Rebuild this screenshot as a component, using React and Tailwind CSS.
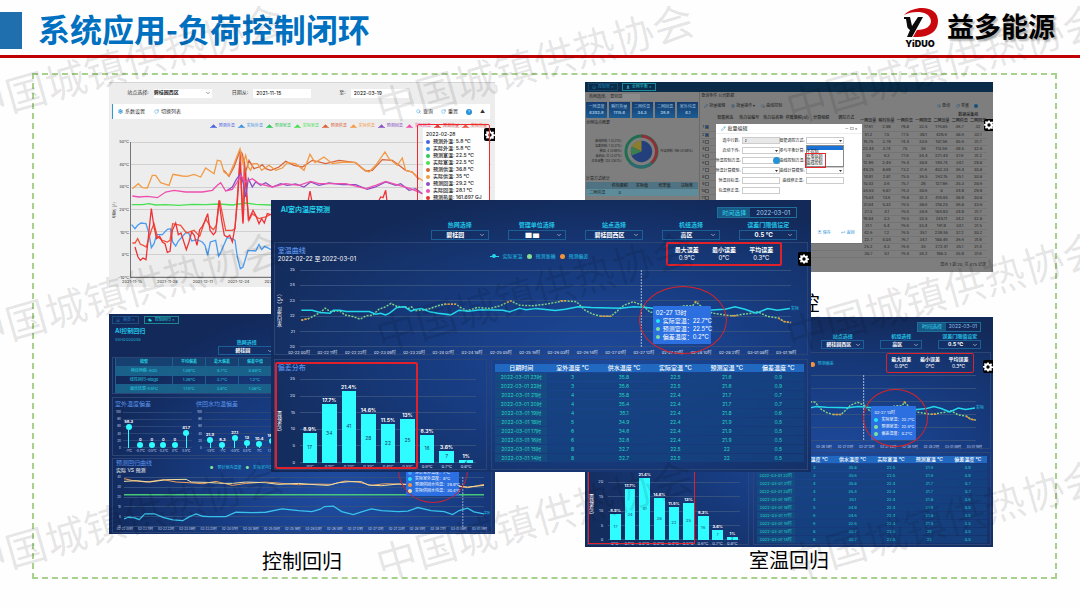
import React from "react";
import {
  ChevronDown,
  Cloud,
  Home,
  Pencil,
  RotateCw,
  Search,
  Settings,
  User,
} from "lucide-react";

const hours = ["23", "22", "21", "20", "19", "18", "17", "16", "15", "14"];
const outdoor = [3, 3, 4, 4, 4, 5, 6, 6, 8, 8];
const supply = [35.8, 35.6, 35.8, 35.4, 35.1, 34.9, 34.6, 32.6, 32.7, 32.7];
const actual = [22.5, 22.5, 22.4, 22.4, 22.4, 22.4, 22.4, 22.4, 22.5, 22.5];
const predicted = [21.6, 21.6, 21.7, 21.7, 21.8, 21.9, 21.9, 21.9, 22, 22];
const deviation = [0.9, 0.9, 0.7, 0.7, 0.6, 0.5, 0.5, 0.5, 0.5, 0.5];

const histogram = [
  { label: "0℃", count: 17, percent: 8.9 },
  { label: "0.1℃", count: 34, percent: 17.7 },
  { label: "0.2℃", count: 41, percent: 21.4 },
  { label: "0.3℃", count: 28, percent: 14.6 },
  { label: "0.4℃", count: 22, percent: 11.5 },
  { label: "0.5℃", count: 25, percent: 13 },
  { label: "0.6℃", count: 16, percent: 8.3 },
  { label: "0.7℃", count: 7, percent: 3.6 },
  { label: "0.8℃", count: 2, percent: 1 },
];

const timeTicks = [
  "02-22 00时", "02-22 11时", "02-22 22时", "02-23 09时", "02-23 20时", "02-24 07时",
  "02-24 18时", "02-25 05时", "02-25 16时", "02-26 03时", "02-26 14时", "02-27 01时",
  "02-27 12时", "02-27 23时", "02-28 10时", "02-28 21时", "03-01 08时", "03-01 19时",
];

// Small parts shared by the dark dashboards

const DarkSelect = ({ label, value, small }) => (
  <label className="flex min-w-0 flex-1 flex-col">
    <span
      className={
        small
          ? "text-center text-[5px] leading-[8px] font-bold text-[#22c3e6]"
          : "text-center text-[6px] leading-[9px] font-bold text-[#22c3e6]"
      }
    >
      {label}
    </span>
    <span
      className={
        small
          ? "flex h-[9px] items-center border border-[#1c5f96] pr-[2px]"
          : "mt-px flex h-[10px] items-center border border-[#1c5f96] pr-[3px]"
      }
    >
      <select
        className={
          small
            ? "min-w-0 flex-1 appearance-none bg-transparent text-[5px] leading-[7px] font-bold text-white [text-align-last:center]"
            : "min-w-0 flex-1 appearance-none bg-transparent text-[6px] leading-[8px] font-bold text-white [text-align-last:center]"
        }
      >
        <option>{value}</option>
      </select>
      <ChevronDown className="size-[6px] text-white" />
    </span>
  </label>
);

const GearButton = ({ className }) => (
  <button
    aria-label="设置"
    className={`absolute flex items-center justify-center rounded-l-[2px] bg-black text-white ${className}`}
  >
    <svg viewBox="0 0 24 24" className="size-[10px] shrink-0" fill="currentColor">
      <path
        fillRule="evenodd"
        d="M10 1h4l.7 3 2 .9L19.400 3.200l2.300 2.500-1.500 2.500.8 2 3 .7v3.200l-3 .8-.8 2 1.500 2.500-2.400 2.400-2.500-1.600-2 .9L14 23h-4l-.8-2.900-2-.9-2.500 1.600-2.400-2.400 1.600-2.500-.9-2-3-.8v-3.200l3-.7.9-2-1.600-2.500 2.400-2.500 2.500 1.700 2-.9zM12 8a4 4 0 1 0 0 8 4 4 0 0 0 0-8z"
      />
    </svg>
  </button>
);

const GridLines = ({ rows, className }) => (
  <div className={`absolute inset-0 flex flex-col justify-between ${className}`}>
    {Array.from({ length: rows }, (_, i) => (
      <div key={i} className="h-px bg-current" />
    ))}
  </div>
);

const YAxis = ({ ticks, className }) => (
  <div className={`-my-[3px] flex flex-col justify-between text-right ${className}`}>
    {ticks.map((t) => (
      <span key={t} className="leading-[6px]">
        {t}
      </span>
    ))}
  </div>
);

const TooltipRow = ({ color, children }) => (
  <div className="flex items-center gap-[3px] whitespace-nowrap">
    <span className="size-[4px] shrink-0 rounded-full" style={{ background: color }} />
    {children}
  </div>
);

const RoomCurve = () => (
  <svg
    viewBox="88 223 1504 230"
    preserveAspectRatio="none"
    className="absolute inset-0 h-full w-full overflow-visible [&_*]:[vector-effect:non-scaling-stroke]"
    fill="none"
  >
    <path d="M1133 223V453" stroke="#a9b8d6" strokeWidth="1" strokeDasharray="2 1" />
    <polyline
      stroke="#7fd08a"
      strokeWidth="1.500"
      strokeDasharray="2 1.300"
      points="92,373 115,368 150,350 165,337 180,347 210,345 225,357 250,362 272,370 290,360 310,358 330,340 350,333 367,323 385,332 410,333 420,338 430,333 440,345 480,340 510,330 530,325 565,325 580,335 600,345 630,335 670,338 700,330 733,315 760,328 800,330 840,325 870,320 895,315 935,318 960,343 985,355 1010,361 1040,361 1060,345 1080,328 1108,318 1140,330 1160,350 1240,335 1265,330 1290,330 1300,318 1320,335 1350,352 1410,360 1470,352 1490,348 1520,362 1555,367 1570,377 1590,380"
    />
    <path
      stroke="#f0913a"
      strokeWidth="1.500"
      strokeDasharray="2 1.300"
      d="M92 373L115 368M530 325H565M722 320L736 315M885 315H905M1008 361H1042M1296 318H1308M1408 360H1430M1552 367L1570 377L1592 380"
    />
    <polyline
      stroke="#22d8ea"
      strokeWidth="1.500"
      points="92,343 125,343 150,350 180,352 190,343 210,343 230,347 300,347 320,355 335,352 350,357 362,352 385,335 408,333 428,346 440,341 460,338 485,348 510,352 550,357 575,343 605,346 640,342 710,343 730,348 760,337 780,342 810,338 870,344 900,340 940,333 980,335 1070,337 1110,333 1150,335 1190,340 1250,345 1320,345 1360,342 1390,340 1420,333 1450,340 1485,352 1520,338 1550,343 1588,338"
    />
  </svg>
);

// Room temperature dashboard, also shown in a compact size
const RoomDashboard = ({ small }) => {
  const title = small
    ? "text-[5px] leading-[8px] text-[#5b93ea]"
    : "text-[7px] leading-[9px] font-medium text-[#5b93ea]";
  const tick = small ? "text-[4px] text-[#d5deef]" : "text-[4px] text-[#e4eaf5]";
  const panel = "border border-[#2c4575] bg-[#173a78]/20";

  return (
    <div
      className={
        small
          ? "relative bg-[radial-gradient(ellipse_at_62%_58%,#1f4da3_0%,#183d85_35%,#132a59_75%)] px-[2px] pb-[2px]"
          : "relative bg-[radial-gradient(ellipse_at_62%_58%,#1f4da3_0%,#183d85_35%,#132a59_75%)] px-[3px] pb-[2px]"
      }
    >
      <header className={small ? "h-[35px] px-[2.500%] pt-[5px]" : "h-[42px] pr-[2%] pl-[1.300%] pt-[5px]"}>
        <div className={small ? "flex h-[10px] justify-between" : "flex h-[13px] items-start justify-between"}>
          <h2
            className={
              small
                ? "text-[6px] leading-[9px] font-bold text-[#22d3ee]"
                : "text-[7px] leading-[10px] font-bold text-[#22d3ee]"
            }
          >
            AI室内温度预测
          </h2>
          <label
            className={
              small
                ? "flex h-[10px] items-center border border-[#1f6f9c] text-[5px]"
                : "mt-[2px] flex h-[11px] items-center border border-[#1f6f9c] text-[6px]"
            }
          >
            <span className="flex h-full items-center bg-[#175a86] px-[4px] text-[#2fd6ee]">
              时间选择
            </span>
            <input
              className={small ? "w-[34px] text-center text-[#8fc3ea]" : "w-[46px] text-center text-[#9fd0f2]"}
              defaultValue="2022-03-01"
            />
          </label>
        </div>
        <div className={small ? "flex gap-[16px] pl-[28%]" : "flex gap-[19px] pt-[2px] pl-[29%]"}>
          <DarkSelect small={small} label="热网选择" value="碧桂园" />
          <DarkSelect small={small} label="管理单位选择" value="▇ ▆" />
          <DarkSelect small={small} label="站点选择" value="碧桂园西区" />
          <DarkSelect small={small} label="机组选择" value="高区" />
          <DarkSelect small={small} label="误差门限值设定" value="0.5 ℃" />
        </div>
      </header>

      <section className={`relative ${panel} ${small ? "h-[97px]" : "h-[113px]"}`}>
        <div className={small ? "flex h-[22px] justify-between pl-[3px] pr-[4%]" : "flex h-[27px] justify-between pl-[3px] pr-[4.700%]"}>
          <div className="w-[42%]">
            <h3 className={`${title} pt-[3px]`}>室温曲线</h3>
            <p className={small ? "text-[5px] leading-[7px] text-white" : "text-[6px] leading-[8px] text-white"}>
              2022-02-22 至 2022-03-01
            </p>
          </div>
          <div
            className={
              small
                ? "flex flex-1 items-center gap-[3px] text-[4px] text-[#22c3e6]"
                : "flex flex-1 items-center gap-[4px] text-[5px] text-[#22c3e6]"
            }
          >
            <span className="h-px w-[9px] bg-[#22d8ea] text-center">
              <i className="mx-auto -mt-[2px] block size-[4px] rounded-full bg-[#22d8ea]" />
            </span>
            实际室温
            <i className="size-[5px] rounded-full bg-[#86e08e]" />
            预测准确
            <i className="size-[5px] rounded-full bg-[#f7933a]" />
            预测偏差
          </div>
          <div
            className={
              small
                ? "flex h-[20px] w-[23%] items-center rounded-[2px] border border-[#e0202a] text-center text-[5px] leading-[7px] text-white"
                : "-mt-px flex h-[24px] w-[23%] items-center rounded-[2px] border-2 border-[#e0202a] text-center text-[6px] leading-[8px] text-white"
            }
          >
            {[["最大误差", "0.9℃"], ["最小误差", "0℃"], ["平均误差", "0.3℃"]].map(([k, v]) => (
              <p key={k} className="flex-1">
                <b>{k}</b>
                <br />
                {v}
              </p>
            ))}
          </div>
        </div>
        <div className={`flex pr-[1.500%] ${tick} ${small ? "h-[66px]" : "h-[77px]"}`}>
          <div className="flex w-[2.400%] items-center justify-center text-[5px] text-white">
            <span className="rotate-180 whitespace-nowrap [writing-mode:vertical-rl]">
              室内温度（℃）
            </span>
          </div>
          <YAxis ticks={[25, 24, 23, 22, 21, 20]} className="w-[1.400%]" />
          <div className="relative ml-[5px] flex-1">
            <GridLines rows={6} className="text-[#33507f]" />
            <RoomCurve />
          </div>
          <span className="self-center text-[#22c3e6]">实际</span>
        </div>
        <div
          className={
            small
              ? "mt-[3px] flex justify-between pr-[2%] pl-[2.500%] text-[3px] leading-[6px] whitespace-nowrap text-[#d5deef]"
              : "mt-[3px] flex justify-between pr-[2%] pl-[2.500%] text-[4px] leading-[6px] whitespace-nowrap text-[#e4eaf5]"
          }
        >
          {timeTicks.map((t) => (
            <span key={t}>{t}</span>
          ))}
        </div>
        {/* highlighted reading */}
        <div
          className={
            small
              ? "absolute top-[53px] left-[70.500%] w-[11%] rounded-[1px] bg-[#2b6fe0] px-[3px] py-[3px] text-[4px] leading-[7px] text-white"
              : "absolute top-[63px] left-[71%] w-[11%] rounded-[1px] bg-[#2b6fe0] px-[3px] py-[3px] text-[6px] leading-[8px] text-white"
          }
        >
          <div>02-27 13时</div>
          <TooltipRow color="#22e5f5">实际室温：22.7℃</TooltipRow>
          <TooltipRow color="#7fe39a">预测室温：22.5℃</TooltipRow>
          <TooltipRow color="#7fe39a">偏差温度：0.2℃</TooltipRow>
        </div>
        <div
          className={
            small
              ? "absolute top-[36px] left-[68.500%] h-[58px] w-[16%] rounded-[50%] border border-[#d9232b]"
              : "absolute top-[43px] left-[68.500%] h-[68px] w-[16.500%] rounded-[50%] border border-[#d9232b]"
          }
        />
      </section>

      <div className={small ? "mt-[3px] flex h-[93px] gap-[4px]" : "mt-[4px] flex h-[111px] gap-[4px]"}>
        <section className={`relative w-[40%] ${panel}`}>
          <h3 className={`pl-[3px] ${title} ${small ? "h-[15px]" : "h-[19px] pt-[3px]"}`}>偏差分布</h3>
          <div className={`flex pr-[5%] ${tick} ${small ? "h-[72px]" : "h-[84px]"}`}>
            <div className="flex w-[6%] items-center justify-center text-[5px] text-white">
              <span className="rotate-180 whitespace-nowrap [writing-mode:vertical-rl]">记录数量</span>
            </div>
            <YAxis ticks={[25, 20, 15, 10, 5, 0]} className="w-[4%]" />
            <div className="relative ml-[5px] flex-1">
              <GridLines rows={6} className="text-[#33507f]" />
              <div className="absolute inset-0 flex items-end">
                {histogram.map((b) => (
                  <div key={b.label} className="flex h-full flex-1 flex-col items-center justify-end">
                    <span className={small ? "text-[4px] leading-[6px] font-bold text-white" : "text-[5px] leading-[7px] font-bold text-white"}>
                      {b.percent}%
                    </span>
                    <div
                      className={
                        small
                          ? "flex w-[74%] items-center justify-center bg-[#2ffcff] text-[4px] text-[#17406b]"
                          : "flex w-[74%] items-center justify-center bg-[#2ffcff] text-[5px] text-[#17406b]"
                      }
                      style={{ height: `${b.percent * 4}%` }}
                    >
                      {b.count}
                    </div>
                  </div>
                ))}
              </div>
            </div>
          </div>
          <div className={`flex pl-[12%] pr-[5%] pt-px text-center leading-[6px] ${tick}`}>
            {histogram.map((b) => (
              <span key={b.label} className="flex-1">
                {b.label}
              </span>
            ))}
          </div>
          <div
            className={
              small
                ? "absolute inset-y-0 left-0 w-[67%] border border-[#e0202a]"
                : "absolute top-[2px] bottom-0 left-0 w-[67.500%] rounded-[2px] border-2 border-[#e0202a]"
            }
          />
        </section>
        <section className={`flex-1 ${panel} px-[3px] ${small ? "pt-[2px]" : "pt-[3px]"}`}>
          <table
            className={
              small
                ? "w-full table-fixed border-separate border-spacing-x-0 border-spacing-y-px text-center text-[4px] leading-[7px] text-[#25d3d0]"
                : "w-full table-fixed border-separate border-spacing-x-0 border-spacing-y-px text-center text-[5px] leading-[8px] text-[#25d3c4]"
            }
          >
            <thead className={small ? "bg-[#2068c0] text-[5px] text-white" : "bg-[#2068c0] text-[6px] leading-[8px] text-white"}>
              <tr>
                {["日期时间", "室外温度 ℃", "供水温度 ℃", "实际室温 ℃", "预测室温 ℃", "偏差温度 ℃"].map((h) => (
                  <th key={h} className="p-0 font-medium whitespace-nowrap">
                    {h}
                  </th>
                ))}
              </tr>
            </thead>
            <tbody>
              {hours.map((h, i) => (
                <tr key={h} className="bg-[#154280]/80">
                  <td className="bg-[#17507f]/60 p-0 whitespace-nowrap">2022-03-01 {h}时</td>
                  <td className="p-0">{outdoor[i]}</td>
                  <td className="p-0">{supply[i]}</td>
                  <td className="p-0">{actual[i]}</td>
                  <td className="p-0">{predicted[i]}</td>
                  <td className="p-0">{deviation[i]}</td>
                </tr>
              ))}
            </tbody>
          </table>
        </section>
      </div>
      <GearButton className={small ? "top-[43px] right-0 h-[13px] w-[10px]" : "top-[52px] right-0 h-[14px] w-[13px]"} />
    </div>
  );
};

// Load forecast window

const forecastLegend = [
  ["预测外温", "#4a62e0"],
  ["实际外温", "#3f93dd"],
  ["预测室温", "#2ec95c"],
  ["实际室温", "#48e052"],
  ["预测供温", "#d9643a"],
  ["实际供温", "#f39a45"],
  ["预测回温", "#8a4fc4"],
  ["实际回温", "#ee4fae"],
  ["预测热量", "#e3342f"],
  ["实际热量", "#f0523c"],
];

const forecastValues = [
  "预测外温: 5.8 ℃",
  "实际外温: 5.8 ℃",
  "预测室温: 22.5 ℃",
  "实际室温: 22.5 ℃",
  "预测供温: 36.8 ℃",
  "实际供温: 35 ℃",
  "预测回温: 29.2 ℃",
  "实际回温: 28.1 ℃",
  "预测热量: 161.697 GJ",
];

const ForecastWindow = () => (
  <div className="relative h-[205px] border-t border-[#d5d5d5] bg-[#ededed] pl-[3px] text-[5px] text-[#333]">
    <div className="flex h-[20px] items-center pl-[4%]">
      <label className="flex items-center gap-[5px]">
        站点选择:
        <span className="flex w-[58px] items-center bg-white pr-px">
          <select className="h-[9px] min-w-0 flex-1 appearance-none font-medium text-black">
            <option>碧桂园西区</option>
          </select>
          <ChevronDown className="size-[6px]" />
        </span>
      </label>
      <label className="ml-[20px] flex items-center gap-[5px]">
        日期从:
        <input className="h-[9px] w-[58px] bg-white pl-[3px] text-black" defaultValue="2021-11-15" />
      </label>
      <label className="ml-[28px] flex items-center gap-[5px]">
        至:
        <input className="h-[9px] w-[58px] bg-white pl-[3px] text-black" defaultValue="2022-03-19" />
      </label>
    </div>
    <div className="mt-[1px] mr-[5px] flex h-[15px] items-center border-l border-[#2d9bd8] bg-white px-[5px]">
      <button className="flex items-center gap-[2px]">
        <Settings className="size-[5px] text-[#2591d6]" strokeWidth={4} />
        系数设置
      </button>
      <button className="ml-[9px] flex items-center gap-[2px]">
        <RotateCw className="size-[5px] text-[#2591d6]" />
        切换列表
      </button>
      <button className="ml-auto flex items-center gap-[2px]">
        <Search className="size-[5px] text-[#2591d6]" />
        查询
      </button>
      <button className="ml-[8px] flex items-center gap-[2px]">
        <RotateCw className="size-[5px] text-[#2591d6]" />
        重置
      </button>
      <button className="mx-[8px] size-[6px] rounded-full bg-[#2591d6] text-[4px] leading-[6px] text-white">?</button>
      <span>▲</span>
    </div>
    <div className="flex h-[14px] items-center justify-between pr-[8px] pl-[25.500%] text-[4px]">
      {forecastLegend.map(([name, color]) => (
        <span key={name} className="flex items-center gap-[2px] whitespace-nowrap" style={{ color }}>
          <svg viewBox="0 0 8 4" className="h-[4px] w-[7px]" fill="currentColor">
            <path d="M4 0L7 3H8V4H0V3H1z" />
          </svg>
          {name}
        </span>
      ))}
    </div>
    <div className="mt-[9px] flex h-[136px] pr-[4px]">
      <div className="flex w-[6px] items-center">
        <span className="rotate-180 text-[4px] whitespace-nowrap [writing-mode:vertical-rl]">温度(℃)</span>
      </div>
      <YAxis
        ticks={["50℃", "40℃", "30℃", "20℃", "10℃", "0℃", "-10℃"]}
        className="w-[11px] text-[4px]"
      />
      <div className="relative ml-px flex-1 border-b border-l border-[#777]">
        <GridLines rows={7} className="text-[#d0d0d0]" />
        <svg
          viewBox="96 200 1080 405"
          preserveAspectRatio="none"
          className="absolute inset-0 h-full w-full [&_*]:[vector-effect:non-scaling-stroke]"
          fill="none"
          strokeWidth="1.300"
        >
          <g transform="translate(0 375)">
            <polyline stroke="#48e052" points="98,13 130,13 150,10 170,14 200,13 240,15 280,12 320,13 360,11 400,14 440,8 470,12 515,14 900,12 1050,13" />
            <polyline stroke="#4a9cf0" points="98,73 108,85 116,75 126,68 141,70 150,100 157,142 165,130 173,103 190,103 205,87 214,85 221,125 230,137 238,122 262,95 270,100 278,122 294,118 310,125 318,135 326,165 334,125 350,120 359,168 368,150 384,112 400,115 408,120 415,170 424,205 432,200 447,150 470,152 480,132 488,148 497,138 515,147 700,120 900,100 970,90" />
            <polyline stroke="#f0523c" points="100,128 108,128 116,115 124,132 133,135 142,140 157,90 165,70 175,108 190,120 205,125 213,120 221,70 245,75 262,98 285,90 302,108 320,55 335,80 343,88 352,75 362,0 380,90 400,90 408,85 415,-10 424,-145 431,65 436,-120 442,-20 450,60 460,40 480,55 500,50 515,42" />
            <polyline stroke="#ee3338" points="108,140 117,170 124,180 132,173 141,178 157,25 165,80 173,115 182,108 190,125 198,130 205,156 213,153 220,90 230,68 238,103 246,98 262,148 270,125 278,95 286,105 294,135 302,88 310,78 318,62 326,40 333,90 343,103 350,95 360,0 368,60 376,105 385,110 392,105 400,125 408,80 415,5 423,-113 432,70 440,-85 448,60 462,30 470,45 480,70 488,55 496,68 505,40 515,43 600,20 626,10 633,-28 640,10 760,30 835,10 845,-10 852,-8 860,-30 866,20" />
          </g>
          <polyline stroke="#8a4fc4" points="385,345 400,335 412,312 425,295 433,325 440,365 448,310 460,335 470,320 485,330 500,322 520,335 545,325 565,330 590,326 615,335 635,320 660,330 690,323 730,328 770,328 805,342 830,335 860,320 890,330 905,325 930,345 950,340 970,355" />
          <polyline stroke="#ee4fae" points="100,362 120,365 145,363 175,367 200,350 225,345 260,350 310,350 340,345 355,330 365,322 380,347 400,342 415,320 425,300 440,320 460,310 480,325 520,335 560,325 600,330 635,318 660,325 700,325 740,325 800,340 830,330 860,318 900,330 935,340 970,355" />
          <polyline stroke="#d9643a" points="375,285 390,303 405,275 423,226 430,235 440,290 450,255 465,280 480,275 490,268 500,280 515,285 540,275 560,258 585,270 610,275 640,255 680,265 720,255 770,262 800,287 820,285 850,253 880,255 900,270 920,285 940,290 960,312" />
          <polyline stroke="#f39a45" points="100,340 118,325 130,337 145,338 160,300 170,300 185,322 210,330 222,297 250,302 265,303 285,297 305,305 320,278 345,295 355,255 365,257 375,290 390,300 405,265 423,220 432,265 440,240 448,275 455,285 462,265 475,265 488,285 510,270 530,285 550,278 565,262 590,265 615,285 633,237 648,262 675,245 700,265 735,260 770,262 790,280 810,290 830,270 858,230 870,250 895,270 910,248 920,285 940,290 955,305 973,317" />
        </svg>
      </div>
    </div>
    <div className="flex gap-[15px] pl-[10px] text-[4px] leading-[8px] whitespace-nowrap">
      {["2021-11-15", "2021-11-28", "2021-12-11", "2021-12-24", "2022-01-06"].map((d) => (
        <span key={d}>{d}</span>
      ))}
    </div>
    <div className="absolute top-[45px] right-[6px] w-[66px] bg-white/95 pt-[3px] pl-[3px] text-[5px] leading-[7px] font-medium text-[#222]">
      <div>2022-02-28</div>
      {forecastValues.map((v, i) => (
        <TooltipRow key={v} color={forecastLegend[i][1]}>
          {v}
        </TooltipRow>
      ))}
    </div>
    <GearButton className="top-[45px] right-0 h-[13px] w-[11px]" />
    <div className="absolute top-[41px] right-[5px] h-[95px] w-[73px] rounded-[2px] border border-[#ee2a30]" />
  </div>
);

// Control regression window

const modelRows = [
  ["神经网络-SGD", "1.09℃", "4.7℃", "0.88℃"],
  ["线性回归-Ridge", "1.39℃", "3.7℃", "1.2℃"],
  ["最优结果-ESFC", "1.14℃", "3.8℃", "1.08℃"],
];

const Lollipops = ({ title, items, className }) => (
  <div className={className}>
    <h3 className="text-[6px] leading-[9px] text-[#5b93ea]">{title}</h3>
    <div className="mt-[4px] flex h-[36px] text-[3px] text-[#d5deef]">
      <YAxis ticks={[100, 80, 60, 40, 20, 0]} className="w-[6px]" />
      <div className="relative ml-[2px] flex-1">
        <GridLines rows={6} className="text-[#2b4576]" />
        <div className="absolute inset-0 flex">
          {items.map(([label, v]) => (
            <div key={label} className="flex flex-1 flex-col items-center justify-end">
              <span className="text-[4px] leading-[5px] font-bold text-white">{v}</span>
              <i className="size-[6px] shrink-0 rounded-full bg-[#2ffcff]" />
              <i className="w-px bg-[#2ffcff]" style={{ height: `${Math.max(v - 8, 0)}%` }} />
            </div>
          ))}
        </div>
      </div>
    </div>
    <div className="flex pl-[8px] pt-px text-center text-[3px] leading-[5px] text-[#d5deef]">
      {items.map(([label]) => (
        <span key={label} className="flex-1">
          {label}
        </span>
      ))}
    </div>
  </div>
);

const RegressionWindow = () => (
  <div className="relative overflow-hidden bg-[radial-gradient(ellipse_at_60%_80%,#1f4da3_0%,#183d85_35%,#12295a_75%)] px-[3px] pb-px">
    <div className="flex h-[11px] items-center gap-[5px] text-[4px] text-[#2a86d8]">
      <span className="flex h-[8px] items-center gap-[3px] border border-[#1c4f80] px-[3px]">
        <Home className="size-[4px]" /> 首页 ×
      </span>
      <span className="flex h-[8px] items-center gap-[3px] border border-[#1d8790] px-[3px] text-[#27d8dc]">
        <Cloud className="size-[4px]" fill="currentColor" /> 控制回归 ×
      </span>
    </div>
    <header className="flex h-[32px] gap-[14px] pl-[3px]">
      <div className="w-[23.500%]">
        <h2 className="pt-px text-[6px] leading-[10px] font-bold text-[#22c3e6]">AI控制回归</h2>
        <p className="text-[4px] leading-[7px] text-[#22a9cc]">SSH0000048</p>
      </div>
      <div className="flex flex-1 gap-[14px] pt-[13px]">
        <DarkSelect small label="热网选择" value="碧桂园" />
        <DarkSelect small label="管理单位选择" value="▇ ▆" />
        <DarkSelect small label="站点选择" value="碧桂园西区" />
        <DarkSelect small label="机组选择" value="高区" />
      </div>
    </header>
    <section className="border border-[#2c4575] px-[2px]">
      <table className="w-[190px] table-fixed border-collapse text-center text-[4px] leading-[8px] text-[#25cfe0]">
        <thead className="bg-[#15406f]">
          <tr>
            <th className="w-[57px] border-x border-[#1d5f8f] p-0">模型</th>
            {["平均偏差", "最大偏差", "偏差中值", "误差率"].map((h) => (
              <th key={h} className="border-x border-[#1d5f8f] p-0">
                {h}
              </th>
            ))}
          </tr>
        </thead>
        <tbody>
          {modelRows.map((row) => (
            <tr key={row[0]} className="border-t border-[#1d5f8f] odd:bg-[#1a6189]">
              {row.map((cell) => (
                <td key={cell} className="border-x border-[#1d5f8f] p-0">
                  {cell}
                </td>
              ))}
              <td className="border-x border-[#1d5f8f] p-0">4%</td>
            </tr>
          ))}
        </tbody>
      </table>
    </section>
    <section className="mt-[3px] flex h-[59px] gap-[4px] border border-[#2c4575] pt-px pl-[2px]">
      <Lollipops
        className="w-[77px]"
        title="室外温度偏差"
        items={[["-1℃", 58.3], ["-0.7℃", 0], ["-0.5℃", 0], ["-0.3℃", 0], ["0℃", 0], ["0.5℃", 41.7]]}
      />
      <Lollipops
        className="w-[94px]"
        title="供回水均温偏差"
        items={[["-1.5℃", 21.9], ["-1℃", 8.3], ["-0.5℃", 27.1], ["0.5℃", 13], ["1℃", 10.4], ["1.5℃", 18.8], ["2℃", 0.5]]}
      />
    </section>
    <section className="relative mt-[2px] border border-[#2c4575]">
      <div className="flex h-[18px] pl-[3px]">
        <div className="w-[25%]">
          <h3 className="text-[6px] leading-[8px] text-[#5b93ea]">预测回归曲线</h3>
          <p className="text-[5px] leading-[6px] text-white">实际 VS 预测</p>
        </div>
        <div className="flex items-center gap-[4px] text-[4px] text-[#22c3e6]">
          <span className="text-[#7fe39a]">●</span> 预计室内温度 <span className="text-[#7fe39a]">●</span>
          实际室内温度 <span>●</span> 预计室外温度
        </div>
      </div>
      <div className="flex h-[50px] pr-px text-[3px] text-[#d5deef]">
        <YAxis ticks={[40, 30, 20, 10, 0, -10]} className="w-[8px]" />
        <div className="relative ml-[3px] flex-1">
          <GridLines rows={6} className="text-[#33507f]" />
          <svg
            viewBox="72 60 1088 149"
            preserveAspectRatio="none"
            className="absolute inset-0 h-full w-full [&_*]:[vector-effect:non-scaling-stroke]"
            fill="none"
          >
            <path d="M1096 60V209" stroke="#8ea3cc" strokeDasharray="2 1" />
            <polyline stroke="#f0a05a" points="72,65 100,71 140,75 190,68 230,75 270,77 310,80 350,73 400,85 440,79 500,75 550,79 600,83 650,81 700,82 740,72 780,75 820,85 860,80 900,81 940,84 1000,86 1050,80 1110,92 1160,82" />
            <polyline stroke="#f3e0a0" points="72,73 110,71 150,75 200,68 260,67 275,75 320,76 370,79 400,79 440,75 500,77 540,82 600,79 650,83 690,85 720,77 750,74 790,74 810,84 850,86 900,81 950,82 1000,88 1050,84 1110,90 1160,85" />
            <path d="M72 113H1160" stroke="#46c878" strokeWidth="1.500" />
            <polyline stroke="#38c2ea" strokeWidth="1.300" points="72,185 85,180 105,182 118,187 135,170 165,170 190,180 220,188 250,190 270,178 290,170 310,177 330,178 380,178 410,165 460,166 500,165 550,155 600,160 640,163 665,156 678,148 705,147 730,163 765,172 790,164 820,155 850,160 900,163 930,162 960,151 1000,160 1040,163 1065,172 1085,160 1110,153 1130,164 1160,170" />
          </svg>
        </div>
        <span className="self-end pb-[12px] text-[#22c3e6]">实际</span>
      </div>
      <div className="flex justify-between pr-[1%] pl-[1%] text-[3px] leading-[5px] whitespace-nowrap text-[#d5deef]">
        {timeTicks.map((t) => (
          <span key={t}>{t}</span>
        ))}
      </div>
      <div className="absolute top-[5px] left-[77.500%] w-[53px] bg-[#2b6fe0] px-[2px] pb-[2px] text-[4px] leading-[6px] text-white">
        <div>03-01 08时</div>
        <TooltipRow color="#3fa0ff">预计室外温度：7℃</TooltipRow>
        <TooltipRow color="#22e5f5">实际室外温度：8℃</TooltipRow>
        <TooltipRow color="#f7933a">预测供回水均温：29.9℃</TooltipRow>
        <TooltipRow color="#f3e0a0">实际供回水均温：30.4℃</TooltipRow>
      </div>
      <div className="absolute -top-[22px] left-[75.500%] h-[66px] w-[70px] rounded-[50%] border border-[#c0243a]" />
    </section>
  </div>
);

// Load control window with the batch edit dialog

const stationRows = [
  [17.61, 2.99, 79.8, 32.5, 176.85, 36.7, 32],
  [51.2, 7.5, 77.5, 39.1, 429.6, 38.6, 32.1],
  [16.75, 2.79, 74.4, 33.6, 107.56, 45.6, 31.7],
  [22.44, 3.74, 75, 36, 113.56, 39.5, 32.6],
  [35, 6.3, 77.6, 34.4, 221.44, 37.6, 31.2],
  [12.96, 2.46, 76.4, 30.6, 146.74, 34.1, 29.8],
  [49.25, 8.69, 73.2, 31.6, 402.33, 36.4, 30.8],
  [14.91, 2.81, 75.5, 36.5, 262.15, 35.1, 30.8],
  [10.53, 3.6, 75.7, 29, 127.96, 35.3, 28.6],
  [34.63, 6.87, 76.3, 30.6, 0, 34.9, 29.9],
  [75.04, 13.6, 76.8, 32.2, 414.65, 38.9, 30.8],
  [31.04, 5.32, 76.5, 38.6, 218.25, 36.8, 33.6],
  [27.3, 4.1, 76.5, 34.6, 184.93, 34.9, 31.7],
  [19.84, 3.3, 76.5, 32.5, 245.11, 34.2, 32.8],
  [31.1, 5.4, 76.6, 33.4, 161.9, 34.1, 31.5],
  [42.6, 7.2, 76.5, 35.1, 239.55, 37.2, 30.2],
  [22.7, 4.04, 76.7, 34.1, 188.46, 36.6, 31.9],
  [25.2, 4.3, 76.6, 35, 272.41, 35.1, 31.4],
  [30.7, 5.1, 76.4, 34.2, 198.3, 35.9, 31.6],
];

const summaryCards = [
  ["一网温度", "6392.8"],
  ["瞬时热量", "1115.6"],
  ["二网供温", "34.3"],
  ["二网回温", "28.8"],
  ["室外均温", "6.1"],
];

const FormField = ({ label, children }) => (
  <label className="flex h-[7px] items-center gap-[2px]">
    <span className="w-[24px] shrink-0 text-right whitespace-nowrap">{label}:</span>
    {children}
  </label>
);

const box = "h-[7px] w-[38px] border border-[#ccc] bg-white pl-[2px]";

const FormSelect = () => (
  <span className="flex h-[7px] w-[38px] items-center border border-[#ccc] bg-white">
    <select className="h-full min-w-0 flex-1 appearance-none" />
    <svg viewBox="0 0 6 4" className="mr-px h-[2px] w-[3px]">
      <path d="M0 0h6L3 4z" fill="#333" />
    </svg>
  </span>
);

const ControlWindow = () => (
  <div className="relative flex h-[190px] flex-col overflow-hidden bg-[#7e7e7e] text-[4px] text-[#222]">
    <div className="flex h-[10px] shrink-0 items-center gap-[4px] bg-[#0a2c48] pl-[3px] text-[#1d84b8]">
      <span className="flex h-[8px] items-center gap-[2px] border border-[#14466b] px-[3px]">
        <Home className="size-[4px]" /> 控制管 ×
      </span>
      <span className="flex h-[8px] items-center gap-[2px] border border-[#1a8a9a] px-[3px] text-[#2ccbd6]">
        <User className="size-[4px]" fill="currentColor" /> 全网平衡 ×
      </span>
    </div>
    <div className="flex min-h-0 flex-1">
      <aside className="w-[28%] shrink-0 px-px">
        <label className="flex h-[10px] items-center gap-[4px] pl-[3px]">
          热网选择:
          <select className="h-[7px] w-[30px] appearance-none bg-[#8b8b8b]">
            <option>碧桂园</option>
          </select>
        </label>
        <div className="flex gap-[2px] text-center">
          {summaryCards.map(([name, v]) => (
            <div key={name} className="flex-1 bg-[linear-gradient(#133b70,#1c5c92)] py-[2px] leading-[6px] whitespace-nowrap text-[#9fc0de]">
              {name}
              <div className="font-bold">{v}</div>
            </div>
          ))}
        </div>
        <p className="mt-[2px] leading-[6px]">全网站点概要</p>
        <div className="mt-[4px] flex h-[42px] items-center justify-center gap-[2px]">
          <div className="text-right text-[3px] leading-[5px] whitespace-nowrap">
            曲线控制: 1 (0.21%)
            <br />
            温差控制: 1 (0.21%)
            <br />
            单回: 4 (0.89%)
            <br />
            未启动: 12 (2.47%)
            <br />
            正在调整: 124 (26.1%)
          </div>
          <svg viewBox="0 0 36 36" className="size-[35px] shrink-0">
            <circle cx="18" cy="18" r="16" fill="none" stroke="#1f6e4e" strokeWidth="3" />
            <path d="M18 2a16 16 0 0 1 10 28" fill="none" stroke="#8f3039" strokeWidth="3" />
            <path d="M28 30A16 16 0 0 1 6 29" fill="none" stroke="#2d6a70" strokeWidth="3" />
            <circle cx="18" cy="18" r="11" fill="#23407c" />
            <path d="M18 18L8 13A11 11 0 0 1 18 7z" fill="#8a7d2e" />
            <path d="M18 18L8 13A11 11 0 0 0 8 22z" fill="#3d7d4e" />
          </svg>
          <span className="text-[3px] whitespace-nowrap">恒温控制: 198 (41.69%)</span>
        </div>
        <p className="mt-[4px] leading-[6px]">计算方式统计</p>
        <table className="w-full table-fixed text-center leading-[7px]">
          <thead className="bg-[#4f7382]">
            <tr>
              {["", "供热面积", "实际值", "给定值", "达标率"].map((h) => (
                <th key={h} className="p-0 font-medium">
                  {h}
                </th>
              ))}
            </tr>
          </thead>
          <tbody>
            <tr className="bg-[#5e8c9b]">
              <td>二网供温</td>
              <td>0</td>
              <td />
              <td />
              <td />
            </tr>
          </tbody>
        </table>
      </aside>
      <div className="min-w-0 flex-1 border-l border-[#6a6a6a] pl-px">
        <p className="leading-[7px]">查询条件 公司数据</p>
        <div className="flex h-[13px] items-center gap-[6px] px-[3px]">
          <button className="flex items-center gap-px"><Pencil className="size-[4px] text-[#14527c]" />批量编辑</button>
          <button className="flex items-center gap-px"><Settings className="size-[4px] text-[#14527c]" />批量操作 ▾</button>
          <button className="flex items-center gap-px"><Cloud className="size-[4px] text-[#14527c]" />曲线控制</button>
          <button className="ml-auto flex items-center gap-px"><Search className="size-[4px] text-[#14527c]" />查询</button>
          <button className="mr-[12px] flex items-center gap-px"><RotateCw className="size-[4px] text-[#14527c]" />重置 <i className="ml-[4px] size-[4px] rounded-full bg-[#14527c]" /></button>
        </div>
        <table className="w-[98%] table-fixed border-collapse text-center [&_td]:border-b [&_td]:border-[#747474] [&_td]:p-0 [&_th]:p-0 [&_th]:font-medium">
          <thead className="leading-[6px] whitespace-nowrap">
            <tr>
              <th className="w-[4px]" />
              <th className="w-[8px]" />
              <th rowSpan={2}>智能状态</th>
              <th rowSpan={2}>热力站编号</th>
              <th rowSpan={2}>热力站名称</th>
              <th rowSpan={2}>供暖面积(㎡)</th>
              <th rowSpan={2} className="w-[24px]">计算组织</th>
              <th rowSpan={2} className="w-[26px]">调控方式</th>
              <th colSpan={7} className="w-[128px] pl-[90px]!">数据采集组</th>
            </tr>
            <tr>
              <th />
              <th />
              {["一网流量", "瞬时热量", "一网供温", "一网回温", "二网流量", "二网供温", "二网回温"].map((h) => (
                <th key={h}>{h}</th>
              ))}
            </tr>
          </thead>
          <tbody className="leading-[6px]">
            {stationRows.map((row, i) => (
              <tr key={i} className="h-[7px]">
                <td>{i + 1}</td>
                <td>
                  <input
                    type="checkbox"
                    aria-label={`第${i + 1}行`}
                    defaultChecked={i < 2}
                    className="block size-[4px] appearance-none border border-[#555] checked:bg-[#124c86]"
                  />
                </td>
                <td />
                <td />
                <td />
                <td />
                <td />
                <td />
                {row.map((v, n) => (
                  <td key={n}>{v}</td>
                ))}
              </tr>
            ))}
          </tbody>
        </table>
        <p className="pt-[4px] pr-[7px] text-right leading-[6px]">显示 1 到 20, 共 475 记录</p>
      </div>
    </div>

    <div role="dialog" aria-label="批量编辑" className="absolute top-[42px] left-[32%] h-[119px] w-[36%] bg-white">
      <div className="flex h-[10px] items-center justify-between border-b border-[#eee] px-[5px] text-[5px]">
        <span className="flex items-center gap-[2px]">
          <Pencil className="size-[5px] text-[#2591d6]" /> 批量编辑
        </span>
        <span className="text-[4px]">－ □ ×</span>
      </div>
      <div className="flex justify-start pt-[3px]">
        <div className="flex flex-col gap-[3px]">
          <FormField label="选中行数">
            <input className="h-[7px] w-[38px] border border-[#ccc] bg-[#e8e8e8] pl-[2px]" defaultValue="2" />
          </FormField>
          <FormField label="启动下传">
            <FormSelect />
          </FormField>
          <FormField label="恒温控制方温">
            <input className={box} />
          </FormField>
          <FormField label="恒温计算模型">
            <FormSelect />
          </FormField>
          <FormField label="恒温目标温">
            <input className={box} />
          </FormField>
          <FormField label="包温修正温">
            <input className={box} />
          </FormField>
        </div>
        <div className="relative flex flex-col gap-[3px]">
          <FormField label="智能调控方式">
            <FormSelect />
          </FormField>
          <FormField label="参与平衡计算">
            <span className="w-[38px]" />
          </FormField>
          <FormField label="曲线控制方温">
            <span className="w-[38px]" />
          </FormField>
          <FormField label="曲线计算模型">
            <FormSelect />
          </FormField>
          <FormField label="曲线修正温">
            <input className={box} />
          </FormField>
          <i className="absolute top-[20px] -left-[7px] size-[7px] rounded-full bg-[#2591d6]" />
          <ul className="absolute top-[8px] right-0 w-[38px] border border-[#888] bg-white leading-[4px]">
            <li className="h-[4px] bg-[#1a73d8]" />
            <li>不控制</li>
            <li>平衡控制</li>
            <li>恒温控制</li>
            <li>曲线控制</li>
          </ul>
          <div className="absolute top-[16px] right-[18px] h-[15px] w-[21px] border border-[#e8262c]" />
        </div>
      </div>
      <div className="absolute right-[8px] bottom-[7px] flex gap-[10px]">
        <button className="text-[#2591d6]">▣ 保存</button>
        <button className="text-[#2591d6]">↩ 返回</button>
      </div>
    </div>
    <GearButton className="top-[37px] right-0 h-[12px] w-[9px]" />
  </div>
);

// Slide frame

const Logo = () => (
  <div className="flex items-center gap-[8px]">
    <svg viewBox="0 0 37 41" className="h-[41px] w-[37px]" role="img" aria-label="YiDUO">
      <path
        d="M2 8C7 3 14 1 20 1c10 0 16 5 16 13 0 10-8 16-21 16h-4l4-7c9 0 14-4 14-9C28 7 22 5 15 5 10 5 6 6 2 8z"
        fill="#c9070d"
      />
      <path d="M2 10h6l2 9 6-9h5L10 30H5l3-7c-2-1-3-3-3-5L4 12H2z" fill="#0a0a0a" />
      <text x="18" y="40" textAnchor="middle" fontSize="9" fontWeight="900" fontFamily="Inter, sans-serif" fill="#0a0a0a">
        YiDUO
      </text>
    </svg>
    <span className="text-[27px] leading-none font-bold text-black [text-shadow:2px_2px_2px_rgb(0_0_0/0.3)]">
      益多能源
    </span>
  </div>
);

const Watermark = () => (
  <div aria-hidden="true" className="pointer-events-none absolute inset-0 overflow-hidden">
    <div className="absolute -top-[50px] -left-[80px] grid auto-rows-[228px] grid-cols-[repeat(3,410px)] place-items-center">
      {Array.from({ length: 9 }, (_, i) => (
        <span key={i} className="-rotate-16 text-[41px] leading-none whitespace-nowrap text-black/10">
          中国城镇供热协会
        </span>
      ))}
    </div>
  </div>
);

const App = () => {
  return (
    <div className="relative min-h-screen overflow-hidden bg-[#fefefe] pb-[30px] font-['Inter','Noto_Sans_CJK_SC',sans-serif] text-black">
      <header className="flex h-[58px] items-center border-b-3 border-[#c00000] pr-[25px]">
        <div className="mt-[5px] h-[37px] w-[22px] bg-[#1f6fae]" />
        <h1 className="ml-[16px] flex-1 font-['Noto_Sans_CJK_SC',sans-serif] text-[32px] leading-none font-bold text-[#0070c0]">
          系统应用-负荷控制闭环
        </h1>
        <Logo />
      </header>

      <main className="relative mt-[15px] mr-[23px] ml-[32px] flex gap-[90px] border-2 border-dashed border-[#a9d18e] pt-[7px] pr-[62px] pb-px pl-[75px]">
        <div className="min-w-0 flex-[386]">
          <figure className="mb-[27px]">
            <ForecastWindow />
          </figure>
          <figure>
            <RegressionWindow />
            <figcaption className="mt-[14px] text-center text-[20px] leading-[28px]">控制回归</figcaption>
          </figure>
        </div>
        <div className="min-w-0 flex-[408]">
          <figure>
            <ControlWindow />
            <figcaption className="mt-[20px] h-[25px] pr-[42.500%] text-right text-[20px] leading-[25px]">控</figcaption>
          </figure>
          <figure>
            <RoomDashboard small />
            <figcaption className="text-center text-[20px] leading-[28px]">室温回归</figcaption>
          </figure>
        </div>
        <div className="absolute top-[125px] left-[23.200%] w-[52.900%]">
          <RoomDashboard />
        </div>
      </main>
      <Watermark />
    </div>
  );
};

export default App;
